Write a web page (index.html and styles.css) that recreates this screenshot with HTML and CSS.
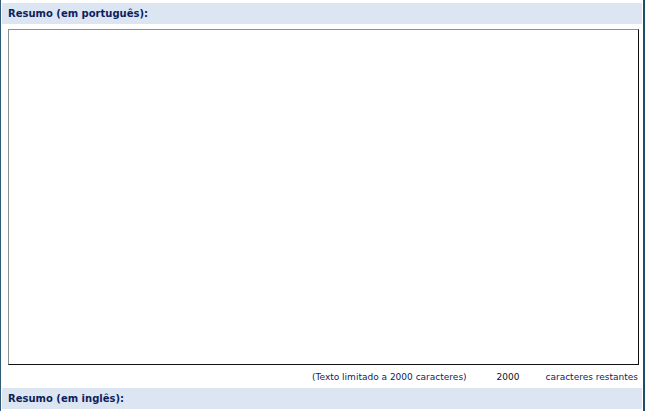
FILE: index.html
```html
<!DOCTYPE html>
<html lang="pt">
<head>
<meta charset="UTF-8">
<title>Resumo</title>
<link rel="stylesheet" href="styles.css">
</head>
<body>
<div class="frame">
    <div class="section-title">Resumo (em português):</div>
    <div class="field">
        <textarea id="resumoPt" class="resumo"></textarea>
        <div class="counter">
            <span>(Texto limitado a 2000 caracteres)</span>
            <span class="count">2000</span>
            <span>caracteres restantes</span>
        </div>
    </div>
    <div class="section-title">Resumo (em inglês):</div>
</div>
</body>
</html>
```
FILE: styles.css
```css
body {
    margin: 0;
    padding: 0;
    font-family: "DejaVu Sans", Verdana, sans-serif;
    background-color: #ffffff;
}
.frame {
    height: 411px;
    box-sizing: border-box;
    border-left: 1px solid #2f5d78;
    border-right: 2px solid #1f4e6a;
    padding: 3px 1px 0 1px;
    overflow: hidden;
}
.section-title {
    background-color: #dce6f3;
    color: #0d1f5c;
    font-size: 10px;
    font-weight: bold;
    height: 21px;
    line-height: 21px;
    padding-left: 6px;
}
.field {
    padding: 5px 4px 5px 6px;
}
.resumo {
    display: block;
    width: 631px;
    height: 336px;
    box-sizing: border-box;
    border-top: 1px solid #8f8f8f;
    border-left: 1px solid #8f8f8f;
    border-right: 1px solid #111111;
    border-bottom: 1px solid #111111;
    resize: none;
    margin: 0;
}
.counter {
    display: flex;
    justify-content: flex-end;
    gap: 26px;
    font-size: 9px;
    color: #0d1f5c;
    padding-top: 6px;
    height: 12px;
    line-height: 12px;
}
.count {
    color: #111111;
    margin-left: 4px;
}
```
